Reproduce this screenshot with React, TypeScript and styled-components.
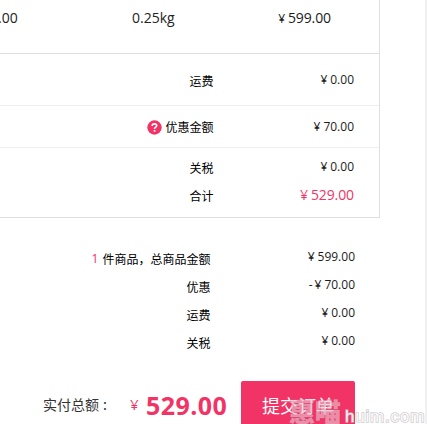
import React from 'react';
import styled, { createGlobalStyle } from 'styled-components';

const PINK = '#f23365';

const GlobalStyle = createGlobalStyle`
  * { box-sizing: border-box; }
  body {
    margin: 0;
    overflow: hidden;
    background: #fff;
    color: #111;
    font-family: "Open Sans", "Noto Sans CJK SC", sans-serif;
  }
`;

const Page = styled.main`
  position: relative;
  width: 427px;
  height: 424px;
  overflow: hidden;
  border-right: 2px solid #f0f0f0;
`;

const OrderTable = styled.section`
  width: 380px;
  height: 218px;
  border-right: 1px solid #dfdfdf;
  border-bottom: 1px solid #dfdfdf;
`;

const ProductRow = styled.div`
  display: grid;
  grid-template-columns: 132px 146px 53px;
  height: 54px;
  padding-top: 8px;
  border-bottom: 1px solid #dfdfdf;
  font-size: 14px;
  line-height: 20px;
  color: #222;
`;

const Clipped = styled.span`
  margin-left: -2px;
`;

const FeeGroup = styled.div<{ $height: number; $top: number; $last?: boolean }>`
  height: ${p => p.$height}px;
  padding-top: ${p => p.$top}px;
  border-bottom: ${p => (p.$last ? 0 : 1)}px solid #efefef;
`;

const Line = styled.div<{ $label: number; $end: number }>`
  display: grid;
  grid-template-columns: ${p => p.$label}px ${p => p.$end - p.$label}px;
  height: 28px;
  align-items: center;
`;

const Label = styled.span`
  display: flex;
  align-items: center;
  justify-content: flex-end;
  font: 12px/20px "Noto Sans CJK SC", sans-serif;
  color: #000;
  white-space: pre;
`;

const Price = styled.span<{ $size?: number; $pink?: boolean; $raise?: number }>`
  display: flex;
  justify-content: flex-end;
  align-items: baseline;
  gap: 2px;
  font-size: ${p => p.$size ?? 12}px;
  line-height: 20px;
  letter-spacing: ${p => (p.$size ? -0.1 : 0)}px;
  color: ${p => (p.$pink ? PINK : '#1b1b1b')};
  padding-bottom: ${p => p.$raise ?? 0}px;
  white-space: nowrap;
`;

const Yen = styled.span<{ $size?: number }>`
  display: inline-block;
  font-size: ${p => p.$size ?? 12}px;
  margin-right: 1px;
`;

const Help = styled.svg`
  width: 15px;
  height: 15px;
  margin-right: 3.5px;
`;

const Count = styled.span`
  color: ${PINK};
  font-family: "Open Sans", sans-serif;
  margin-right: 4px;
`;

const Summary = styled.section`
  padding-top: 27px;
`;

const Checkout = styled.footer`
  display: flex;
  height: 48px;
  margin-top: 24px;
  padding-left: 43px;
`;

const TotalLabel = styled.span`
  display: flex;
  width: 87px;
  font: 14px/47px "Noto Sans CJK SC", sans-serif;
  color: #333;
  white-space: nowrap;
`;

const Colon = styled.span`
  margin-left: 4px;
`;

const TotalYen = styled.span`
  width: 16px;
  font-size: 15px;
  line-height: 46px;
  color: ${PINK};
`;

const TotalValue = styled.strong`
  width: 95px;
  font-size: 25px;
  font-weight: 700;
  line-height: 48px;
  letter-spacing: 0.45px;
  color: ${PINK};
`;

const Submit = styled.button`
  width: 114px;
  height: 48px;
  padding: 0;
  border: 0;
  border-radius: 2px;
  background: ${PINK};
  color: #fff;
  font: 18px/48px "Noto Sans CJK SC", sans-serif;
`;

const Watermark = styled.div`
  position: absolute;
  left: 289px;
  top: 396px;
  display: flex;
  align-items: baseline;
  gap: 4px;
  line-height: 29px;
  white-space: nowrap;
  pointer-events: none;
`;

const MarkName = styled.span`
  font: 900 26px/29px "Noto Sans CJK SC", sans-serif;
  color: rgba(235, 200, 212, 0.62);
  paint-order: stroke fill;
  -webkit-text-stroke: 1px rgba(190, 120, 145, 0.45);
`;

const MarkDomain = styled.span`
  font: 17px/29px "Liberation Sans", sans-serif;
  letter-spacing: 0.8px;
  color: rgba(255, 255, 255, 0.9);
  paint-order: stroke fill;
  -webkit-text-stroke: 1.6px rgba(195, 190, 193, 0.75);
`;

type MoneyProps = { value: string; size?: number; yen?: number; pink?: boolean; prefix?: string; raise?: number };

const Money = ({ value, size, yen, pink, prefix, raise }: MoneyProps) => (
  <Price $size={size} $pink={pink} $raise={raise}>
    {prefix && <span>{prefix}</span>}
    <Yen $size={yen}>¥</Yen>
    <span>{value}</span>
  </Price>
);

const HelpIcon = () => (
  <Help viewBox="0 0 15 15" aria-label="help">
    <circle cx="7.5" cy="7.5" r="7.2" fill={PINK} />
    <path d="M5.2 6V5.5C5.2 3.3 9.7 3.3 9.7 5.7C9.7 7.2 7.5 7.2 7.5 9" fill="none" stroke="#fff" strokeWidth="1.6" />
    <rect x="6.7" y="10" width="1.7" height="1.7" fill="#fff" />
  </Help>
);

const summary = [
  { label: '件商品，总商品金额', value: '599.00', count: '1' },
  { label: '优惠', value: '70.00', prefix: '-' },
  { label: '运费', value: '0.00' },
  { label: '关税', value: '0.00' },
];

export default function App() {
  return (
    <>
      <GlobalStyle />
      <Page>
        <OrderTable>
          <ProductRow>
            <Clipped>.00</Clipped>
            <span>0.25kg</span>
            <Money value="599.00" size={14} />
          </ProductRow>
          <FeeGroup $height={52} $top={13}>
            <Line $label={213.5} $end={354}>
              <Label>运费</Label>
              <Money value="0.00" raise={3} />
            </Line>
          </FeeGroup>
          <FeeGroup $height={42} $top={7}>
            <Line $label={213.5} $end={354}>
              <Label><HelpIcon />优惠金额</Label>
              <Money value="70.00" raise={1} />
            </Line>
          </FeeGroup>
          <FeeGroup $height={69} $top={6} $last>
            <Line $label={213.5} $end={354}>
              <Label>关税</Label>
              <Money value="0.00" raise={3} />
            </Line>
            <Line $label={213.5} $end={354}>
              <Label>合计</Label>
              <Money value="529.00" size={14} yen={14} pink raise={2} />
            </Line>
          </FeeGroup>
        </OrderTable>
        <Summary>
          {summary.map(row => (
            <Line key={row.label} $label={210.5} $end={355}>
              <Label>{row.count && <Count>{row.count}</Count>}{row.label}</Label>
              <Money value={row.value} prefix={row.prefix} raise={4} />
            </Line>
          ))}
        </Summary>
        <Checkout>
          <TotalLabel>实付总额<Colon>:</Colon></TotalLabel>
          <TotalYen>¥</TotalYen>
          <TotalValue>529.00</TotalValue>
          <Submit>提交订单</Submit>
        </Checkout>
        <Watermark>
          <MarkName>惠喵</MarkName>
          <MarkDomain>huim.com</MarkDomain>
        </Watermark>
      </Page>
    </>
  );
}
